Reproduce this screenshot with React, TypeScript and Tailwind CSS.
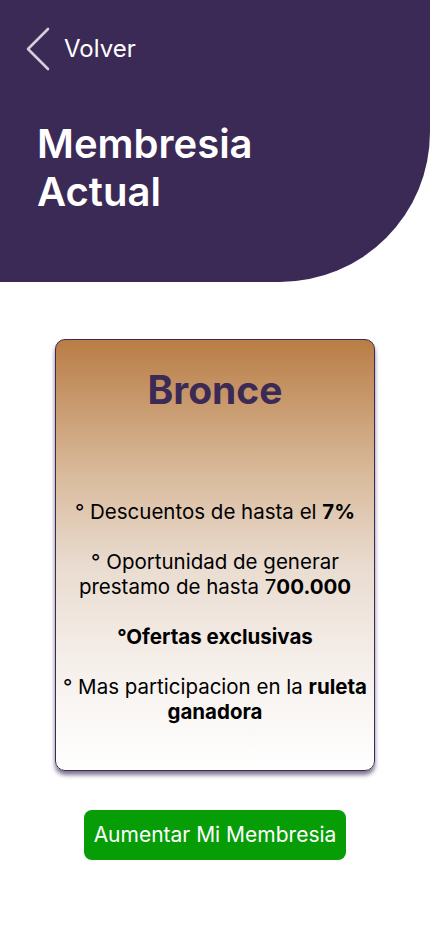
export default function App() {
  return (
    <div className="flex h-[932px] w-[430px] flex-col bg-white font-['Inter',sans-serif]">
      <header className="h-[282px] shrink-0 rounded-br-[150px] bg-[#3c2a56] text-white">
        <div className="flex items-center pl-[24px] pt-[26px]">
          <svg width="28" height="46" viewBox="0 0 28 46" fill="none">
            <polyline
              points="24,3 4,23 24,43"
              stroke="#d3cfd8"
              strokeWidth="2.6"
              strokeLinecap="round"
              strokeLinejoin="round"
            />
          </svg>
          <span className="ml-[12px] text-[24px]">Volver</span>
        </div>
        <h1 className="mt-[48px] pl-[37px] text-[40px] font-semibold leading-[48px]">
          Membresia
          <br />
          Actual
        </h1>
      </header>

      <div className="flex flex-1 flex-col items-center pt-[57px]">
        <div className="h-[432px] w-[320px] rounded-[10px] border border-[#3c2a56] bg-[linear-gradient(to_bottom,#b97d45_0%,#d8b898_30%,#e9dbcf_52%,#f5efea_75%,#ffffff_100%)] text-center text-[20.5px] leading-[25px] text-black shadow-[0_4px_4px_rgba(60,42,86,0.65)]">
          <div className="pt-[27px] text-[39px] font-bold leading-[46px] text-[#3c2a56]">Bronce</div>
          <div className="mt-[86px] flex flex-col gap-[25px]">
            <p>
              ° Descuentos de hasta el <b>7%</b>
            </p>
            <p>
              ° Oportunidad de generar
              <br />
              prestamo de hasta 7<b>00.000</b>
            </p>
            <p className="font-bold">°Ofertas exclusivas</p>
            <p>
              ° Mas participacion en la <b>ruleta</b>
              <br />
              <b>ganadora</b>
            </p>
          </div>
        </div>

        <button className="mt-[39px] h-[50px] w-[262px] rounded-[8px] bg-[#069d06] text-[21px] text-white">
          Aumentar Mi Membresia
        </button>
      </div>
    </div>
  )
}
